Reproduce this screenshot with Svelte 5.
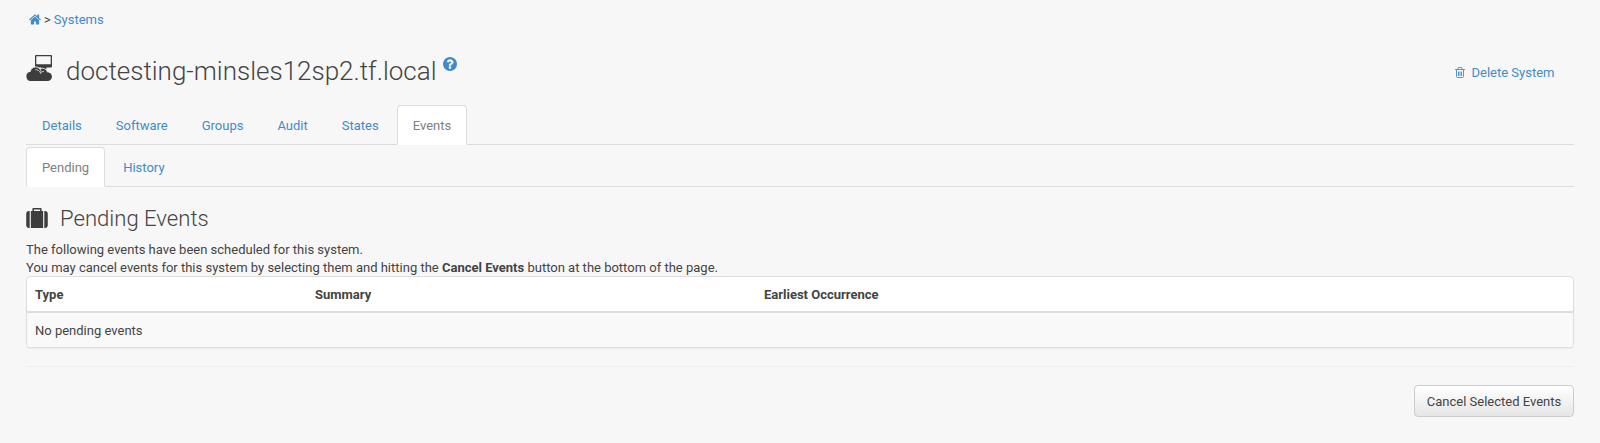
<script>
  const tabs = ['Details', 'Software', 'Groups', 'Audit', 'States', 'Events'];
  const subtabs = ['Pending', 'History'];
</script>

<main>
  <nav class="crumbs">
    <a href="#home" aria-label="Home"><svg class="home" viewBox="64 192 1664 1344" preserveAspectRatio="none"><path d="M1472 992v480q0 26-19 45t-45 19h-384v-384h-256v384h-384q-26 0-45-19t-19-45v-480q0-1 .5-3t.5-3l575-474 575 474q1 2 1 6zm223-69l-62 74q-8 9-21 11h-3q-13 0-21-7l-692-577-692 577q-12 8-24 7-13-2-21-11l-62-74q-8-10-7-23.5t11-21.5l719-599q32-26 76-26t76 26l244 204v-195q0-14 9-23t23-9h192q14 0 23 9t9 23v408l219 182q10 8 11 21.5t-7 23.5z"/></svg></a>
    <span>&gt;</span>
    <a href="#systems">Systems</a>
  </nav>

  <header>
    <svg class="system" viewBox="0 0 26 26">
      <path fill-rule="evenodd" d="M10 0h15q1 0 1 1v10.500q0 1-1 1h-4.500v1.500h-5v-1.500H9V1q0-1 1-1zm.3 1.300v8h14.400v-8z"/>
      <g stroke="#f7f7f7" stroke-width=".8">
        <circle cx="16.800" cy="18" r="4.700"/>
        <circle cx="9.600" cy="17.300" r="5.400"/>
      </g>
      <path d="M4.500 26a4.700 4.700 0 0 1-.6-9.200q1.300-.3 2.600.1l3.500-1.400 6 1.500 4.700.2q4.800 0 5.300 4.300a4.500 4.500 0 0 1-4.500 4.500z"/>
      <path d="M9.300 14.700q4-.2 5.500 4M14.300 18.200q1.400-1.800 3.700-1.800" fill="none" stroke="#f7f7f7" stroke-width=".7"/>
    </svg>
    <h1>doctesting-minsles12sp2.tf.local</h1>
    <a class="help" href="#help" aria-label="Help"><svg viewBox="128 128 1536 1536"><path d="M1024 1376v-192q0-14-9-23t-23-9h-192q-14 0-23 9t-9 23v192q0 14 9 23t23 9h192q14 0 23-9t9-23zm256-672q0-88-55.500-163t-138.500-116-170-41q-243 0-371 213-15 24 8 42l132 100q7 6 19 6 16 0 25-12 53-68 86-92 34-24 86-24 48 0 85.500 26t37.500 59q0 38-20 61t-68 45q-63 28-115.500 86.500t-52.500 125.500v36q0 14 9 23t23 9h192q14 0 23-9t9-23q0-19 21.500-49.500t54.500-49.500q32-18 49-28.500t46-35 44.500-48 28-60.500 12.500-81zm384 192q0 209-103 385.500t-279.500 279.500-385.500 103-385.500-103-279.500-279.500-103-385.500 103-385.500 279.500-279.500 385.500-103 385.500 103 279.500 279.500 103 385.500z"/></svg></a>
    <a class="delete" href="#delete">
      <svg viewBox="0 0 10 11"><path d="M0 2.500h10M3 2.300V1.300Q3 .5 3.800.5h2.400Q7 .5 7 1.300v1M1.500 2.500v7q0 1 1 1h5q1 0 1-1v-7M3.500 4.500v4.500M5 4.500v4.500M6.500 4.500v4.500" fill="none" stroke="currentColor" stroke-width=".9"/></svg>
      Delete System
    </a>
  </header>

  <ul class="tabs">
    {#each tabs as tab}<li><a href="#{tab}" class:active={tab === 'Events'}>{tab}</a></li>{/each}
  </ul>
  <ul class="tabs sub">
    {#each subtabs as tab}<li><a href="#{tab}" class:active={tab === 'Pending'}>{tab}</a></li>{/each}
  </ul>

  <h2>
    <svg viewBox="0 0 1792 1664"><path d="M640 256h512v-128h-512v128zm-352 0v1408h-64q-92 0-158-66t-66-158v-960q0-92 66-158t158-66h64zm1120 0v1408h-1024v-1408h128v-160q0-40 28-68t68-28h576q40 0 68 28t28 68v160h128zm384 224v960q0 92-66 158t-158 66h-64v-1408h64q92 0 158 66t66 158z"/></svg>
    Pending Events
  </h2>
  <p>The following events have been scheduled for this system.<br />You may cancel events for this system by selecting them and hitting the <strong>Cancel Events</strong> button at the bottom of the page.</p>

  <div class="panel">
    <div class="row head"><span>Type</span><span>Summary</span><span>Earliest Occurrence</span></div>
    <div class="row empty"><span>No pending events</span></div>
  </div>

  <hr />
  <div class="actions"><button>Cancel Selected Events</button></div>
</main>

<style>
  :global(body) { background: #f7f7f7; }
  main {
    box-sizing: border-box;
    height: 443px;
    padding: 10px 26px 0;
    overflow: hidden;
    font: 13px/18px Roboto, sans-serif;
    color: #444;
  }
  a { color: #428bca; text-decoration: none; }
  svg { fill: currentColor; display: block; flex: none; }
  .crumbs { display: flex; align-items: center; gap: 3px; height: 20px; padding-left: 3px; }
  .home { width: 12px; height: 10.500px; margin-bottom: 1px; }
  header { display: flex; align-items: flex-start; height: 75px; }
  .system { width: 26px; height: 26px; margin-top: 25px; color: #3d3d3d; }
  h1 { margin: 25px 0 0 14px; font-size: 26px; line-height: 32px; font-weight: 300; }
  .help { margin: 27px 0 0 6px; }
  .help svg { width: 14px; height: 14px; }
  .delete { display: flex; align-items: center; gap: 7px; margin: 33px 19.500px 0 auto; height: 20px; }
  .delete svg { width: 10px; height: 11px; margin-bottom: 1px; }
  .tabs { display: flex; gap: 2px; list-style: none; margin: 0; padding: 0; height: 39px; border-bottom: 1px solid #ddd; }
  .sub { margin-top: 2px; }
  .tabs a { display: block; box-sizing: border-box; height: 40px; padding: 11px 15px 9px; border: 1px solid transparent; border-radius: 4px 4px 0 0; }
  .tabs a.active { background: #fff; color: #808080; border-color: #ddd; border-bottom-color: #fff; }
  h2 { display: flex; align-items: center; gap: 12px; height: 28px; margin: 17px 0 9px; font-size: 22.100px; line-height: 28px; font-weight: 300; }
  h2 svg { width: 22px; height: 20px; color: #3d3d3d; }
  p { height: 35px; margin: 0; }
  .panel { box-sizing: border-box; height: 72px; background: #fff; border: 1px solid #ddd; border-radius: 4px; box-shadow: 0 1px 1px rgba(0, 0, 0, .05); overflow: hidden; }
  .row { display: grid; grid-template-columns: 280px 449px 1fr; padding: 9px 8px 7px; height: 18px; }
  .head { font-weight: 700; border-bottom: 2px solid #ddd; }
  .empty { background: #f9f9f9; }
  hr { margin: 18px 0; border: 0; border-top: 1px solid #eee; }
  .actions { display: flex; justify-content: flex-end; }
  button { box-sizing: border-box; width: 160px; height: 32px; padding: 2px 0 0; font: inherit; color: #444; white-space: nowrap; background: linear-gradient(#fff, #e6e6e6); border: 1px solid #ccc; border-radius: 4px; }
</style>
